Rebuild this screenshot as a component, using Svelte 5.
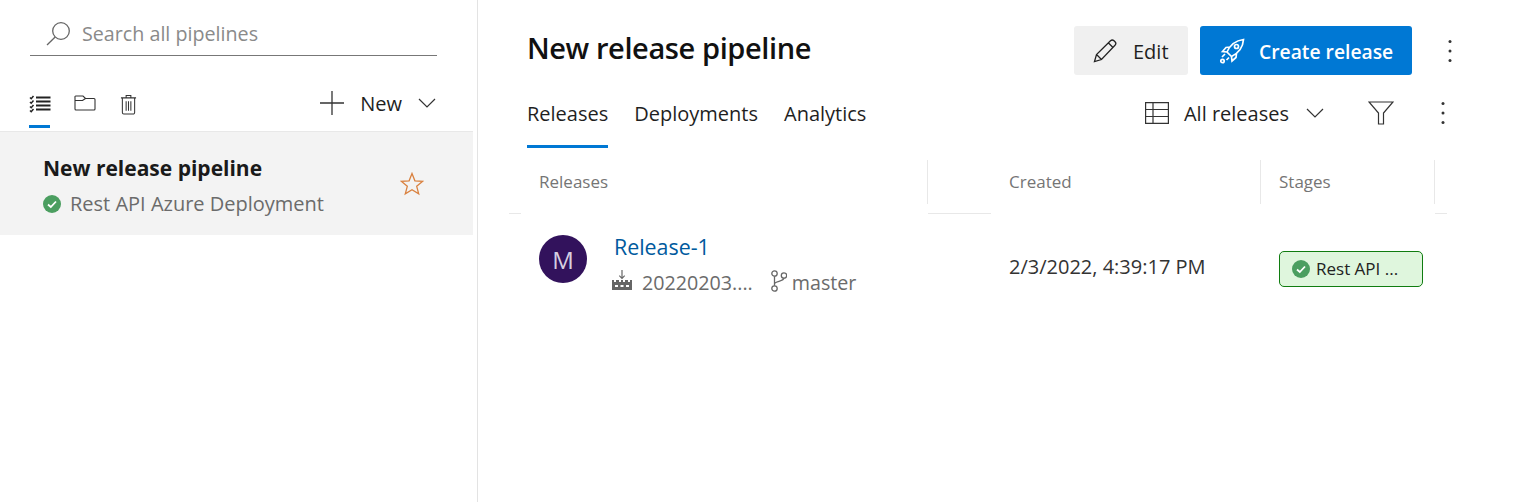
<script lang="ts">
  const tabs = ['Releases', 'Deployments', 'Analytics'];
</script>

<div class="page">
  <aside class="sidebar">
    <div class="search">
      <svg class="search-icon" viewBox="0 0 24 24" width="24" height="24" fill="none" stroke="#666" stroke-width="1.3">
        <circle cx="15" cy="9" r="8.300" />
        <path d="M9.200 15 1 23" />
      </svg>
      <span>Search all pipelines</span>
    </div>

    <div class="side-tools">
      <div class="view-tabs">
        <button class="view-tab active" aria-label="Mine">
          <svg viewBox="0 0 22 18" width="22" height="18" fill="none" stroke="#222">
            <path d="M7 2.500h14.500M7 6.500h14.500M7 10.500h14.500M7 14.500h14.500" stroke-width="2" />
            <path d="M1 2.500l1.200 1.200L4.500 1M1 7l1.200 1.200L4.500 5.500M1 11.500l1.200 1.200L4.500 10M1 15.500l1.200 1.200L4.500 14" stroke-width="1.500" />
          </svg>
        </button>
        <button class="view-tab" aria-label="Folders">
          <svg viewBox="0 0 22 18" width="22" height="18" fill="none" stroke="#333" stroke-width="1.100">
            <path d="M1 3.500V15a1 1 0 0 0 1 1h18a1 1 0 0 0 1-1V5.500a1 1 0 0 0-1-1H11.500L9 2H2a1 1 0 0 0-1 1.500zM1 6.500h7.500L11.500 4.500" />
          </svg>
        </button>
        <button class="view-tab" aria-label="Deleted">
          <svg viewBox="0 0 18 22" width="17" height="21" fill="none" stroke="#333" stroke-width="1.100">
            <path d="M1 4h16M6.500 4V1.500h5V4M2.500 4v15.500a1.500 1.500 0 0 0 1.500 1.500h10a1.500 1.500 0 0 0 1.500-1.500V4M6.500 7.500v10M9 7.500v10M11.500 7.500v10" />
          </svg>
        </button>
      </div>
      <button class="new-btn">
        <svg viewBox="0 0 24 24" width="24" height="24" fill="none" stroke="#333" stroke-width="1.300">
          <path d="M12 0v24M0 12h24" />
        </svg>
        <span>New</span>
        <svg viewBox="0 0 18 10" width="18" height="10" fill="none" stroke="#333" stroke-width="1.200">
          <path d="M1 1l8 8 8-8" />
        </svg>
      </button>
    </div>

    <div class="pipeline-row">
      <div class="pipeline-info">
        <div class="pipeline-name">New release pipeline</div>
        <div class="pipeline-status">
          <svg viewBox="0 0 18 18" width="18" height="18">
            <circle cx="9" cy="9" r="9" fill="#4b9e60" />
            <path d="M5 9.500l2.800 2.500L13 6.500" fill="none" stroke="#fff" stroke-width="1.800" />
          </svg>
          <span>Rest API Azure Deployment</span>
        </div>
      </div>
      <svg class="star" viewBox="0 0 24 24" width="24" height="24" fill="none" stroke="#d9813f" stroke-width="1.300">
        <path d="M12 1.500l2.900 7.300 7.800.5-6 5 2 7.600-6.700-4.200-6.700 4.200 2-7.600-6-5 7.800-.5z" />
      </svg>
    </div>
  </aside>

  <main class="content">
    <header class="title-bar">
      <h1>New release pipeline</h1>
      <div class="actions">
        <button class="btn btn-edit">
          <svg viewBox="0 0 24 24" width="24" height="24" fill="none" stroke="#222" stroke-width="1.300">
            <path d="M1.500 22.500l2-7L17.500 1.800a2.500 2.500 0 0 1 3.500 0l1 1a2.500 2.500 0 0 1 0 3.500L8.500 20.500zM3.500 15.500l5 5M15.500 4l4.500 4.500" />
          </svg>
          <span>Edit</span>
        </button>
        <button class="btn btn-create">
          <svg viewBox="0 0 26 26" width="26" height="26" fill="none" stroke="#fff" stroke-width="1.700">
            <path d="M8 14c3-7 9-11.500 16.500-12.500C24 9 19.500 15 12.500 18.500zM8 14l-4.500-.5L7 9.500l4-.5M12.500 18.500l.5 4.500 4-3.500.5-4" />
            <circle cx="17.500" cy="8.500" r="2" />
            <circle cx="3.500" cy="23" r="1.700" />
            <path d="M3 19l3-3M7.500 22l2.500-2.500" />
          </svg>
          <span>Create release</span>
        </button>
        <button class="more" aria-label="More actions">
          <svg viewBox="0 0 4 24" width="4" height="24" fill="#333">
            <circle cx="2" cy="2.500" r="1.500" /><circle cx="2" cy="12" r="1.500" /><circle cx="2" cy="21.500" r="1.500" />
          </svg>
        </button>
      </div>
    </header>

    <nav class="tab-bar">
      <div class="tabs">
        {#each tabs as tab, i}
          <button class="tab" class:active={i === 0}>{tab}</button>
        {/each}
      </div>
      <div class="filters">
        <button class="view-picker">
          <svg viewBox="0 0 24 22" width="24" height="22" fill="none" stroke="#333" stroke-width="1.200">
            <path d="M.6.600h22.800v20.800H.6zM.6 7.500h22.800M.6 14.500h22.800M8 .600v20.800" />
          </svg>
          <span>All releases</span>
          <svg class="picker-chev" viewBox="0 0 18 10" width="18" height="10" fill="none" stroke="#333" stroke-width="1.200">
            <path d="M1 1l8 8 8-8" />
          </svg>
        </button>
        <button class="filter" aria-label="Filter">
          <svg viewBox="0 0 26 24" width="26" height="24" fill="none" stroke="#333" stroke-width="1.200">
            <path d="M1 1h24l-9.500 11v11h-5V12z" />
          </svg>
        </button>
        <button class="more" aria-label="More">
          <svg viewBox="0 0 4 24" width="4" height="24" fill="#333">
            <circle cx="2" cy="2.500" r="1.500" /><circle cx="2" cy="12" r="1.500" /><circle cx="2" cy="21.500" r="1.500" />
          </svg>
        </button>
      </div>
    </nav>

    <section class="table">
      <div class="thead">
        <div class="edge"></div>
        <div class="th th-releases">Releases</div>
        <div class="edge th-gap"></div>
        <div class="th th-created">Created</div>
        <div class="th th-stages">Stages</div>
        <div class="edge th-end"></div>
      </div>
      <div class="row">
        <div class="avatar">M</div>
        <div class="release">
          <a href="#release" class="release-name">Release-1</a>
          <div class="release-meta">
            <svg class="build-icon" viewBox="0 0 20 20" width="20" height="20" fill="#666">
              <path d="M9.400 0h1.200v7l1.700-1.700.8.800L10 9.200 6.900 6.100l.8-.8 1.700 1.700z" />
              <path d="M0 10h2v2h2v-2h3v2h2v-2h2v2h2v-2h3v2h2v-2h2v10H0zm3 5v2h3v-2zm5.500 0v2h3v-2zm5.500 0v2h3v-2z" />
            </svg>
            <span class="build">20220203....</span>
            <svg class="branch" viewBox="0 0 16 22" width="16" height="22" fill="none" stroke="#666" stroke-width="1.300">
              <circle cx="3.500" cy="3.500" r="2.700" />
              <circle cx="3.500" cy="18.500" r="2.700" />
              <circle cx="13" cy="5.500" r="2.700" />
              <path d="M3.500 6.200v9.600M3.500 14c0-3 9.500-2.500 9.500-6" />
            </svg>
            <span>master</span>
          </div>
        </div>
        <div class="created">2/3/2022, 4:39:17 PM</div>
        <div class="stage">
          <svg viewBox="0 0 18 18" width="18" height="18">
            <circle cx="9" cy="9" r="9" fill="#4b9e60" />
            <path d="M5 9.500l2.800 2.500L13 6.500" fill="none" stroke="#fff" stroke-width="1.800" />
          </svg>
          <span>Rest API ...</span>
        </div>
      </div>
    </section>
  </main>
</div>

<style>
  :global(body) {
    margin: 0;
    background: #fff;
    font-family: "Open Sans", "Noto Sans", sans-serif;
  }

  button {
    background: none;
    border: none;
    padding: 0;
    font: inherit;
    color: inherit;
  }

  svg {
    display: block;
    flex: none;
  }

  .page {
    display: flex;
    height: 502px;
    overflow: hidden;
    color: #1f1f1f;
  }

  .sidebar {
    width: 473px;
    padding-right: 4px;
    border-right: 1px solid #e3e3e3;
    flex: none;
    box-sizing: content-box;
    display: flex;
    flex-direction: column;
  }

  .search {
    margin: 16px 0 0 30px;
    width: 407px;
    height: 40px;
    box-sizing: border-box;
    border-bottom: 1px solid #777;
    display: flex;
    align-items: center;
    gap: 12px;
    padding: 0 0 4px 16px;
    color: #8a8a8a;
    font-size: 19.7px;
  }

  .side-tools {
    display: flex;
    justify-content: space-between;
    margin-top: 32px;
    height: 44px;
    padding: 0 37px 0 29px;
    border-bottom: 1px solid #e8e8e8;
    width: 473px;
    box-sizing: border-box;
  }

  .view-tabs {
    display: flex;
    gap: 24px;
  }

  .view-tab {
    width: 21px;
    height: 40px;
    display: flex;
    justify-content: center;
    padding-top: 7px;
    box-sizing: border-box;
    border-bottom: 3px solid transparent;
  }

  .view-tab.active {
    border-bottom-color: #0078d4;
  }

  .view-tab + .view-tab {
    padding-top: 6px;
  }

  .view-tab:last-child {
    margin-left: -1px;
  }

  .new-btn {
    display: flex;
    align-items: center;
    gap: 16px;
    height: 30px;
    font-size: 20px;
  }

  .pipeline-row {
    height: 103px;
    background: #f3f3f3;
    padding: 0 49px 0 43px;
    display: flex;
    align-items: center;
    justify-content: space-between;
  }

  .pipeline-name {
    font-size: 21px;
    font-weight: 700;
    line-height: 30px;
    color: #1a1a1a;
  }

  .pipeline-status {
    display: flex;
    align-items: center;
    gap: 9px;
    font-size: 20px;
    line-height: 30px;
    color: #6b6b6b;
    margin-top: 6px;
  }

  .pipeline-info {
    padding-top: 4px;
  }

  .content {
    flex: 1;
    padding-left: 49px;
    padding-right: 70px;
    min-width: 0;
  }

  .title-bar {
    display: flex;
    justify-content: space-between;
    height: 75px;
    padding-top: 26px;
    box-sizing: border-box;
  }

  h1 {
    margin: 0;
    font-size: 29px;
    font-weight: 600;
    letter-spacing: -0.4px;
    line-height: 44px;
    color: #111;
  }

  .actions {
    display: flex;
    gap: 12px;
    height: 49px;
  }

  .btn {
    display: flex;
    align-items: center;
    border-radius: 3px;
    font-size: 20px;
    height: 49px;
    box-sizing: border-box;
  }

  .btn span {
    margin-top: 2px;
  }

  .btn-edit {
    width: 114px;
    background: #f0f0f0;
    padding-left: 19px;
    gap: 16px;
  }

  .btn-create {
    width: 212px;
    background: #0078d4;
    color: #fff;
    padding-left: 19px;
    gap: 14px;
    font-weight: 600;
    font-size: 19.3px;
  }

  .more {
    display: flex;
    align-items: center;
    justify-content: center;
    width: 4px;
    height: 49px;
    margin-left: 24px;
  }

  .tab-bar {
    display: flex;
    justify-content: space-between;
    height: 73px;
    align-items: flex-start;
  }

  .tabs {
    display: flex;
    gap: 26px;
    margin-top: 15px;
  }

  .tab {
    font-size: 20px;
    line-height: 27px;
    height: 58px;
    padding: 2px 0 10px;
    box-sizing: border-box;
    border-bottom: 3px solid transparent;
  }

  .tab.active {
    border-bottom-color: #0078d4;
  }

  .filters {
    display: flex;
    align-items: center;
    margin-top: 26px;
    height: 24px;
    margin-right: 7px;
  }

  .view-picker {
    display: flex;
    align-items: center;
    gap: 15px;
    font-size: 20px;
  }

  .picker-chev {
    margin-left: 2px;
  }

  .filter {
    margin-left: 44px;
  }

  .filters .more {
    height: 24px;
    margin-left: 47px;
  }

  .thead {
    display: flex;
    margin: 12px 0 0 -18px;
    height: 54px;
    width: 938px;
    color: #757575;
    font-size: 17px;
  }

  .edge {
    border-bottom: 1px solid #e8e8e8;
    width: 12px;
    flex: none;
  }

  .th {
    height: 44px;
    display: flex;
    align-items: center;
    box-sizing: border-box;
    padding-bottom: 2px;
  }

  .th-releases {
    width: 407px;
    padding-left: 18px;
    border-right: 1px solid #e8e8e8;
  }

  .th-gap {
    width: 63px;
  }

  .th-created {
    width: 270px;
    padding-left: 18px;
    border-right: 1px solid #e8e8e8;
  }

  .th-stages {
    width: 174px;
    padding-left: 18px;
    border-right: 1px solid #e8e8e8;
  }

  .row {
    display: flex;
    margin-top: 21px;
    align-items: flex-start;
    padding-left: 12px;
  }

  .avatar {
    width: 48px;
    height: 48px;
    border-radius: 50%;
    background: #32125c;
    color: #d6cfe0;
    font-size: 24px;
    display: flex;
    align-items: center;
    justify-content: center;
    flex: none;
  }

  .release {
    width: 422px;
    padding-left: 27px;
    box-sizing: border-box;
    flex: none;
    margin-top: -3px;
  }

  .release-name {
    display: block;
    font-size: 21.4px;
    line-height: 30px;
    color: #005a9e;
    text-decoration: none;
  }

  .release-meta {
    display: flex;
    align-items: center;
    font-size: 19.7px;
    line-height: 30px;
    color: #6b6b6b;
    margin-top: 6px;
    margin-left: -2px;
  }

  .build-icon {
    margin-top: -6px;
  }

  .build {
    margin-left: 10px;
  }

  .branch {
    margin: -5px 5px 0 18px;
  }

  .created {
    width: 270px;
    flex: none;
    font-size: 20px;
    line-height: 30px;
    margin-top: 17px;
    color: #333;
  }

  .stage {
    width: 144px;
    height: 36px;
    box-sizing: border-box;
    margin-top: 16px;
    border: 1px solid #107c10;
    border-radius: 5px;
    background: #dff6dd;
    display: flex;
    align-items: center;
    gap: 6px;
    padding: 0 0 0 12px;
    font-size: 17px;
    color: #222;
  }

  .stage span {
    margin-top: -2px;
  }
</style>
